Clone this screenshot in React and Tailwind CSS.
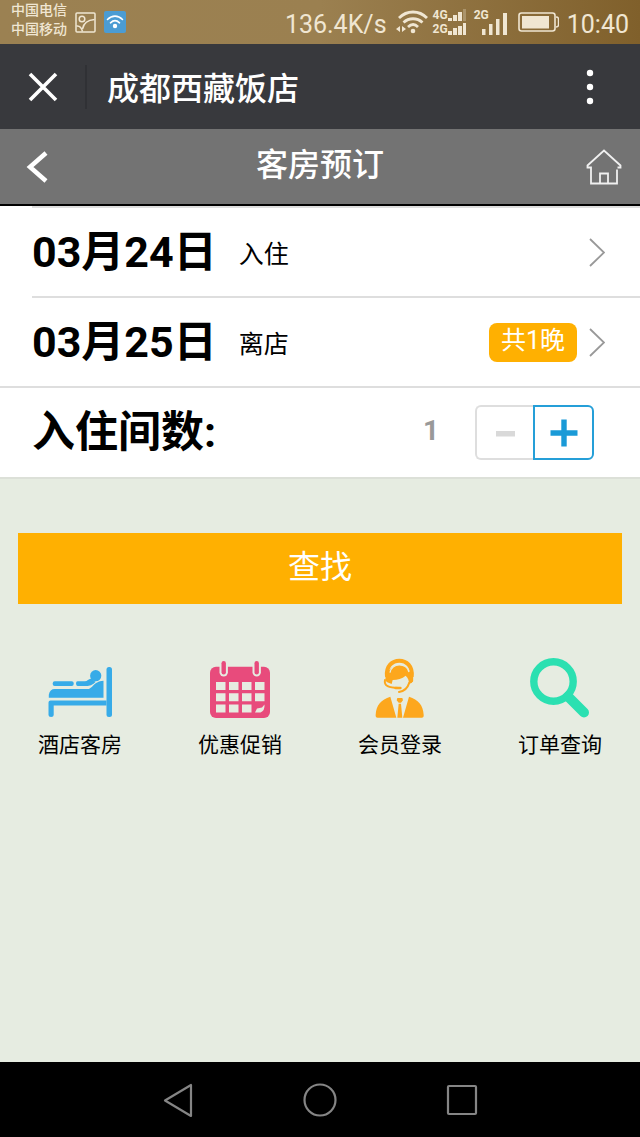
import React, { useState } from "react";

function StatusBar() {
  return (
    <div className="flex h-11 items-center justify-between bg-linear-to-r from-[#9b8152] via-[#9b8050] to-[#80602b] pr-[11px] pl-[11px] text-[#f0e6d2]">
      <div className="flex items-center gap-1">
        <div className="flex flex-col pb-1 text-[14px] leading-[19px] font-medium">
          <span>中国电信</span>
          <span>中国移动</span>
        </div>
        <svg className="ml-1 h-[21px] w-[21px]" viewBox="0 0 21 21" fill="none" stroke="currentColor" strokeWidth="1.5">
          <rect x="1" y="1" width="19" height="19" rx="1" />
          <circle cx="7" cy="7" r="2.800" />
          <path d="M1.500 14c3.500-.5 5 1.500 6 5.500M7.500 17C8.500 11.500 12 8 19.500 7.500" />
        </svg>
        <svg className="ml-1 h-[22px] w-[22px]" viewBox="0 0 22 22">
          <rect width="22" height="22" rx="2" fill="#4b9cd3" />
          <g fill="none" stroke="#fff" strokeWidth="1.600" strokeLinecap="round">
            <path d="M3.500 8.500c4.500-4.500 10.500-4.500 15 0M6.500 11.800c3-2.800 6-2.800 9 0" />
          </g>
          <circle cx="11" cy="15" r="2.200" fill="#fff" />
        </svg>
      </div>

      <div className="flex items-center font-[Roboto]">
        <span className="pt-1 text-[25px] leading-none">136.4K/s</span>
        <svg className="ml-2 h-[26px] w-[34px]" viewBox="0 0 34 26" fill="none" stroke="currentColor" strokeWidth="2.800">
          <path d="M4 9c8-8 20-8 28 0M8.500 13.500c5.500-5 13.500-5 19 0M13 18c3.200-3 7-3 10 0" />
          <circle cx="18" cy="22" r="2.300" fill="currentColor" stroke="none" />
          <path d="M1 20l4-3v6zM11 20l-4-3v6z" fill="currentColor" stroke="none" />
        </svg>
        <div className="ml-1 flex flex-col text-[12px] leading-[14px] font-bold">
          <span className="flex items-center">
            4G
            <svg className="h-3 w-[18px]" viewBox="0 0 18 12" fill="currentColor">
              <path d="M0 9h4v3H0zM5 6h4v6H5zM10 3h4v9h-4z" />
              <path d="M15 0h3v12h-3z" opacity=".3" />
            </svg>
          </span>
          <span className="flex items-center">
            2G
            <svg className="h-3 w-[18px]" viewBox="0 0 18 12" fill="currentColor">
              <path d="M0 8h4v4H0zM5 5h4v7H5zM10 3h4v9h-4zM15 0h3v12h-3z" />
            </svg>
          </span>
        </div>
        <div className="ml-2 flex items-start text-[12px] leading-[12px] font-bold">
          <span className="-mr-2">2G</span>
          <svg className="mt-1 h-[22px] w-[27px]" viewBox="0 0 27 22" fill="currentColor">
            <path d="M1 16h3.500v6H1zM8 11h3.500v11H8zM15 6h3.500v16H15zM22 0h4v22h-4z" />
          </svg>
        </div>
        <svg className="ml-[10px] h-[21px] w-[41px]" viewBox="0 0 41 21">
          <rect x="1" y="1" width="36" height="18" rx="2.500" fill="none" stroke="currentColor" strokeWidth="1.600" />
          <path d="M4 4h27v12.500H4z" fill="currentColor" />
          <path d="M38 5c2 0 2.500 1 2.500 2v6c0 1-.5 2-2.500 2" fill="none" stroke="currentColor" strokeWidth="1.500" />
        </svg>
        <span className="ml-2 pt-1 text-[25px] leading-none">10:40</span>
      </div>
    </div>
  );
}

function TitleBar() {
  return (
    <div className="flex h-[85px] items-center bg-[#38393d] text-white">
      <button aria-label="关闭" className="flex h-11 w-[87px] items-center border-r-2 border-[#303135] pl-7">
        <svg className="h-[30px] w-[30px]" viewBox="0 0 30 30" stroke="currentColor" strokeWidth="3.600">
          <path d="M2 2l26 26M28 2L2 28" />
        </svg>
      </button>
      <h1 className="grow pt-1 pl-5 text-[32px] leading-none font-medium">成都西藏饭店</h1>
      <button aria-label="更多" className="flex h-11 w-[100px] items-center justify-center">
        <svg className="h-9 w-2" viewBox="0 0 8 36" fill="currentColor">
          <circle cx="4" cy="4" r="3.200" />
          <circle cx="4" cy="18" r="3.200" />
          <circle cx="4" cy="32" r="3.200" />
        </svg>
      </button>
    </div>
  );
}

function PageHeader() {
  return (
    <div className="flex h-[77px] items-center justify-between border-b-2 border-black bg-[#737373] px-[18px] text-white">
      <button aria-label="返回" className="flex w-10 pl-2">
        <svg className="h-8 w-[22px]" viewBox="0 0 22 32" fill="none" stroke="currentColor" strokeWidth="4.500">
          <path d="M20 2L4 16l16 14" />
        </svg>
      </button>
      <h2 className="pb-1 text-[32px] leading-none font-medium">客房预订</h2>
      <a href="#home" aria-label="首页" className="flex w-10 justify-end">
        <svg className="h-9 w-9" viewBox="0 0 36 36" fill="none" stroke="#f0f0f0" strokeWidth="1.800">
          <path d="M5 18.500H1.500v-2L18 1.500l16.500 15v2h-3M5 17.500v17h26v-14" />
          <path d="M14 34v-9.500h8V34" />
        </svg>
      </a>
    </div>
  );
}

function Chevron() {
  return (
    <svg className="h-[29px] w-4" viewBox="0 0 16 29" fill="none" stroke="#999" strokeWidth="1.800">
      <path d="M1 1l14 13.500L1 28" />
    </svg>
  );
}

function DateRow({ date, label, nights }) {
  return (
    <button className="flex h-[88px] w-full items-center pr-[35px] text-left text-black">
      <span className="text-[43px] leading-none font-bold">{date}</span>
      <span className="mt-1 ml-[22px] text-[25px] leading-none">{label}</span>
      <span className="grow" />
      {nights && (
        <span className="mr-3 flex h-[39px] items-center rounded-lg bg-[#ffb001] px-3 pb-1 text-[25px] leading-none text-white">
          {nights}
        </span>
      )}
      <Chevron />
    </button>
  );
}

function RoomCount() {
  const [count, setCount] = useState(1);

  return (
    <div className="flex h-[91px] items-center border-b-2 border-[#dce0d8] bg-white pr-[46px] pl-8">
      <span id="rooms" className="grow text-[43px] leading-none font-bold">入住间数:</span>
      <output aria-labelledby="rooms" className="mr-9 pb-1 text-[28px] leading-none font-bold text-[#999]">
        {count}
      </output>
      <button
        aria-label="减少"
        onClick={() => setCount(Math.max(1, count - 1))}
        className="flex h-[55px] w-[58px] items-center justify-center rounded-l-md border-2 border-r-0 border-[#dedede]"
      >
        <svg className="h-7 w-7" viewBox="0 0 28 28" fill="#d9d9d9">
          <path d="M5 12h19v5.500H5z" />
        </svg>
      </button>
      <button
        aria-label="增加"
        onClick={() => setCount(count + 1)}
        className="flex h-[55px] w-[61px] items-center justify-center rounded-r-md border-2 border-[#259fd8]"
      >
        <svg className="h-7 w-7" viewBox="0 0 28 28" fill="#1a9ad7">
          <path d="M11.300 .5h5.400v10.800h10.800v5.400H16.700v10.800h-5.400V16.700H.5v-5.400h10.800z" />
        </svg>
      </button>
    </div>
  );
}

function BedIcon() {
  return (
    <svg className="h-[52px] w-16" viewBox="0 0 64 52" fill="#37abe8">
      <rect x="58.500" y="1" width="5.500" height="50" rx="2.500" />
      <path d="M.5 36.500q0-2 2-2h56v5H5.700V49q0 2-2.600 2T.5 49z" />
      <path d="M.8 31.700v-3q1-5.700 6-5.700h33c5 0 5-7.500 15.700-8.300v17z" />
      <rect x="4.700" y="15.200" width="21" height="4.800" rx="2" />
      <path d="M29.500 15.200H37c2.500 0 4-3.200 6.500-2.400 1.500 1.600 3 2.400 4.200 3-3.500 3.500-6 4.200-9 4.200h-9.200q-1.500 0-1.500-2.400t1.500-2.400z" />
      <circle cx="47.700" cy="9.700" r="5.600" />
    </svg>
  );
}

function CalendarIcon() {
  return (
    <svg className="h-[58px] w-[60px]" viewBox="0 0 60 58">
      <rect x="0" y="6.700" width="60" height="51.300" rx="6" fill="#e84b7c" />
      <rect x="9.500" y="0" width="8.400" height="16.500" rx="4.200" fill="#e6ece1" />
      <rect x="42.500" y="0" width="8.400" height="16.500" rx="4.200" fill="#e6ece1" />
      <rect x="11.500" y="1" width="4.400" height="13.500" rx="2.200" fill="#e84b7c" />
      <rect x="44.500" y="1" width="4.400" height="13.500" rx="2.200" fill="#e84b7c" />
      <g fill="#e6ece1">
        <path d="M6 22h9.500v8H6zM19 22h9.500v8H19zM32 22h9.500v8H32zM45 22h9.500v8H45z" />
        <path d="M6 33.300h9.500v8H6zM19 33.300h9.500v8H19zM32 33.300h9.500v8H32zM45 33.300h9.500v8H45z" />
        <path d="M6 44.500h9.500v8H6zM19 44.500h9.500v8H19zM32 44.500h9.500v8H32z" />
        <path d="M45 52.500l2-4 5-1 2.500-3q.5 6-4 8z" />
      </g>
    </svg>
  );
}

function AgentIcon() {
  return (
    <svg className="h-[60px] w-[50px]" viewBox="18 16 150 180" fill="none" stroke="#fda71d">
      <path d="M54 72C46 8 136 8 128 72" strokeWidth="12" />
      <path
        d="M53 88C46 20 136 20 129 90L119 94C121 84 117 76 110 69C99 78 86 82 71 82L68 94Z"
        fill="#fda71d"
        stroke="none"
      />
      <path d="M63 60C66 30 114 28 120 58" stroke="#e6ece1" strokeWidth="4" />
      <path d="M128 64v20M54 66v16" strokeWidth="9" strokeLinecap="round" />
      <path d="M48 82C44 100 60 105 88 106" strokeWidth="6" strokeLinecap="round" />
      <path d="M121 90C116 106 106 116 90 118" strokeWidth="6" strokeLinecap="round" />
      <path d="M80 106h14" strokeWidth="8" strokeLinecap="round" />
      <g fill="#fda71d" stroke="none">
        <path d="M26 195Q19 195 20 186C22 156 36 141 64 132L82 195Z" />
        <path d="M158 195Q165 195 164 186C162 156 148 141 120 132L102 195Z" />
        <path d="M85 136h15l2 7-6 7h-7l-6-7zM89 153h7l4 42H85z" />
      </g>
    </svg>
  );
}

function SearchIcon() {
  return (
    <svg className="h-[60px] w-[60px]" viewBox="0 0 60 60" fill="none" stroke="#2be0b1">
      <circle cx="23.500" cy="23.500" r="19.700" strokeWidth="7.400" />
      <path d="M38 38.500l16 16" strokeWidth="10" strokeLinecap="round" />
    </svg>
  );
}

const LINKS = [
  { href: "#rooms", label: "酒店客房", icon: <BedIcon /> },
  { href: "#promo", label: "优惠促销", icon: <CalendarIcon /> },
  { href: "#login", label: "会员登录", icon: <AgentIcon /> },
  { href: "#orders", label: "订单查询", icon: <SearchIcon /> },
];

function SystemNav() {
  return (
    <nav className="flex h-[75px] items-center justify-center gap-[108px] bg-black text-[#858585]">
      <button aria-label="后退">
        <svg className="h-9 w-[34px]" viewBox="0 0 34 36" fill="none" stroke="currentColor" strokeWidth="2.200" strokeLinejoin="round">
          <path d="M30 3v31L4 18.500z" />
        </svg>
      </button>
      <button aria-label="主屏幕">
        <svg className="h-9 w-[34px]" viewBox="0 0 34 36" fill="none" stroke="currentColor" strokeWidth="2.200">
          <circle cx="17" cy="18" r="15.500" />
        </svg>
      </button>
      <button aria-label="最近任务">
        <svg className="h-9 w-[34px]" viewBox="0 0 34 36" fill="none" stroke="currentColor" strokeWidth="2.200">
          <rect x="3" y="4" width="28" height="28" rx="1" />
        </svg>
      </button>
    </nav>
  );
}

export default function App() {
  return (
    <div className="flex min-h-screen flex-col bg-[#e6ece1] font-[Roboto,'Noto_Sans_CJK_SC',sans-serif] text-black">
      <StatusBar />
      <TitleBar />
      <PageHeader />

      <main className="grow">
        <div className="border-b-2 border-[#dedede] bg-white pl-8">
          <div className="border-t-2 border-b-2 border-[#dedede]">
            <DateRow date="03月24日" label="入住" />
          </div>
          <DateRow date="03月25日" label="离店" nights="共1晚" />
        </div>
        <RoomCount />

        <div className="px-[18px] pt-[54px]">
          <button className="h-[71px] w-full bg-[#ffb001] pb-1 text-[32px] leading-none text-white">
            查找
          </button>
        </div>

        <div className="mt-[52px] grid grid-cols-4">
          {LINKS.map((item) => (
            <a key={item.href} href={item.href} className="flex flex-col items-center gap-[14px]">
              <span className="flex h-[62px] items-end">{item.icon}</span>
              <span className="text-[21px] leading-[26px]">{item.label}</span>
            </a>
          ))}
        </div>
      </main>

      <SystemNav />
    </div>
  );
}
